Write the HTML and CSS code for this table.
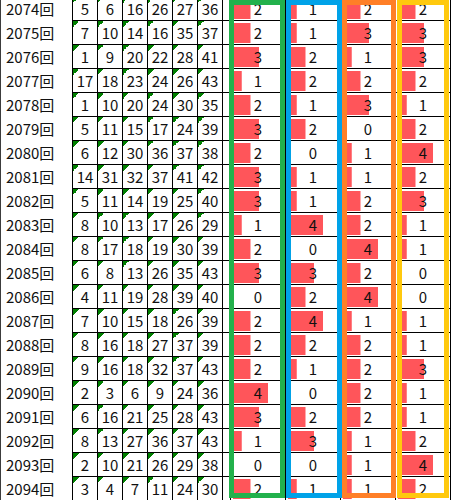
FILE: index.html
```html
<!DOCTYPE html>
<html>
<head>
<meta charset="UTF-8">
<title>回数表</title>
<link rel="stylesheet" href="styles.css">
</head>
<body>
<div class="sheet">
	<div class="row"><div class="no">2074回</div><div class="n">5</div><div class="n">6</div><div class="n">16</div><div class="n">26</div><div class="n">27</div><div class="n">36</div><div class="gap"></div><div class="d" style="--v:2">2</div><div class="d" style="--v:1">1</div><div class="d" style="--v:2">2</div><div class="d" style="--v:2">2</div></div>
	<div class="row"><div class="no">2075回</div><div class="n">7</div><div class="n">10</div><div class="n">14</div><div class="n">16</div><div class="n">35</div><div class="n">37</div><div class="gap"></div><div class="d" style="--v:2">2</div><div class="d" style="--v:1">1</div><div class="d" style="--v:3">3</div><div class="d" style="--v:3">3</div></div>
	<div class="row"><div class="no">2076回</div><div class="n">1</div><div class="n">9</div><div class="n">20</div><div class="n">22</div><div class="n">28</div><div class="n">41</div><div class="gap"></div><div class="d" style="--v:3">3</div><div class="d" style="--v:2">2</div><div class="d" style="--v:1">1</div><div class="d" style="--v:3">3</div></div>
	<div class="row"><div class="no">2077回</div><div class="n">17</div><div class="n">18</div><div class="n">23</div><div class="n">24</div><div class="n">26</div><div class="n">43</div><div class="gap"></div><div class="d" style="--v:1">1</div><div class="d" style="--v:2">2</div><div class="d" style="--v:2">2</div><div class="d" style="--v:2">2</div></div>
	<div class="row"><div class="no">2078回</div><div class="n">1</div><div class="n">10</div><div class="n">20</div><div class="n">24</div><div class="n">30</div><div class="n">35</div><div class="gap"></div><div class="d" style="--v:2">2</div><div class="d" style="--v:1">1</div><div class="d" style="--v:3">3</div><div class="d" style="--v:1">1</div></div>
	<div class="row"><div class="no">2079回</div><div class="n">5</div><div class="n">11</div><div class="n">15</div><div class="n">17</div><div class="n">24</div><div class="n">39</div><div class="gap"></div><div class="d" style="--v:3">3</div><div class="d" style="--v:2">2</div><div class="d" style="--v:0">0</div><div class="d" style="--v:2">2</div></div>
	<div class="row"><div class="no">2080回</div><div class="n">6</div><div class="n">12</div><div class="n">30</div><div class="n">36</div><div class="n">37</div><div class="n">38</div><div class="gap"></div><div class="d" style="--v:2">2</div><div class="d" style="--v:0">0</div><div class="d" style="--v:1">1</div><div class="d" style="--v:4">4</div></div>
	<div class="row"><div class="no">2081回</div><div class="n">14</div><div class="n">31</div><div class="n">32</div><div class="n">37</div><div class="n">41</div><div class="n">42</div><div class="gap"></div><div class="d" style="--v:3">3</div><div class="d" style="--v:1">1</div><div class="d" style="--v:1">1</div><div class="d" style="--v:2">2</div></div>
	<div class="row"><div class="no">2082回</div><div class="n">5</div><div class="n">11</div><div class="n">14</div><div class="n">19</div><div class="n">25</div><div class="n">40</div><div class="gap"></div><div class="d" style="--v:3">3</div><div class="d" style="--v:1">1</div><div class="d" style="--v:2">2</div><div class="d" style="--v:3">3</div></div>
	<div class="row"><div class="no">2083回</div><div class="n">8</div><div class="n">10</div><div class="n">13</div><div class="n">17</div><div class="n">26</div><div class="n">29</div><div class="gap"></div><div class="d" style="--v:1">1</div><div class="d" style="--v:4">4</div><div class="d" style="--v:2">2</div><div class="d" style="--v:1">1</div></div>
	<div class="row"><div class="no">2084回</div><div class="n">8</div><div class="n">17</div><div class="n">18</div><div class="n">19</div><div class="n">30</div><div class="n">39</div><div class="gap"></div><div class="d" style="--v:2">2</div><div class="d" style="--v:0">0</div><div class="d" style="--v:4">4</div><div class="d" style="--v:1">1</div></div>
	<div class="row"><div class="no">2085回</div><div class="n">6</div><div class="n">8</div><div class="n">13</div><div class="n">26</div><div class="n">35</div><div class="n">43</div><div class="gap"></div><div class="d" style="--v:3">3</div><div class="d" style="--v:3">3</div><div class="d" style="--v:2">2</div><div class="d" style="--v:0">0</div></div>
	<div class="row"><div class="no">2086回</div><div class="n">4</div><div class="n">11</div><div class="n">19</div><div class="n">28</div><div class="n">39</div><div class="n">40</div><div class="gap"></div><div class="d" style="--v:0">0</div><div class="d" style="--v:2">2</div><div class="d" style="--v:4">4</div><div class="d" style="--v:0">0</div></div>
	<div class="row"><div class="no">2087回</div><div class="n">7</div><div class="n">10</div><div class="n">15</div><div class="n">18</div><div class="n">26</div><div class="n">39</div><div class="gap"></div><div class="d" style="--v:2">2</div><div class="d" style="--v:4">4</div><div class="d" style="--v:1">1</div><div class="d" style="--v:1">1</div></div>
	<div class="row"><div class="no">2088回</div><div class="n">8</div><div class="n">16</div><div class="n">18</div><div class="n">27</div><div class="n">37</div><div class="n">39</div><div class="gap"></div><div class="d" style="--v:2">2</div><div class="d" style="--v:2">2</div><div class="d" style="--v:2">2</div><div class="d" style="--v:1">1</div></div>
	<div class="row"><div class="no">2089回</div><div class="n">9</div><div class="n">16</div><div class="n">18</div><div class="n">32</div><div class="n">37</div><div class="n">43</div><div class="gap"></div><div class="d" style="--v:2">2</div><div class="d" style="--v:1">1</div><div class="d" style="--v:2">2</div><div class="d" style="--v:3">3</div></div>
	<div class="row"><div class="no">2090回</div><div class="n">2</div><div class="n">3</div><div class="n">6</div><div class="n">9</div><div class="n">24</div><div class="n">36</div><div class="gap"></div><div class="d" style="--v:4">4</div><div class="d" style="--v:0">0</div><div class="d" style="--v:2">2</div><div class="d" style="--v:1">1</div></div>
	<div class="row"><div class="no">2091回</div><div class="n">6</div><div class="n">16</div><div class="n">21</div><div class="n">25</div><div class="n">28</div><div class="n">43</div><div class="gap"></div><div class="d" style="--v:3">3</div><div class="d" style="--v:2">2</div><div class="d" style="--v:2">2</div><div class="d" style="--v:1">1</div></div>
	<div class="row"><div class="no">2092回</div><div class="n">8</div><div class="n">13</div><div class="n">27</div><div class="n">36</div><div class="n">37</div><div class="n">43</div><div class="gap"></div><div class="d" style="--v:1">1</div><div class="d" style="--v:3">3</div><div class="d" style="--v:1">1</div><div class="d" style="--v:2">2</div></div>
	<div class="row"><div class="no">2093回</div><div class="n">2</div><div class="n">10</div><div class="n">21</div><div class="n">26</div><div class="n">29</div><div class="n">38</div><div class="gap"></div><div class="d" style="--v:0">0</div><div class="d" style="--v:0">0</div><div class="d" style="--v:1">1</div><div class="d" style="--v:4">4</div></div>
	<div class="row"><div class="no">2094回</div><div class="n">3</div><div class="n">4</div><div class="n">7</div><div class="n">11</div><div class="n">24</div><div class="n">30</div><div class="gap"></div><div class="d" style="--v:2">2</div><div class="d" style="--v:1">1</div><div class="d" style="--v:1">1</div><div class="d" style="--v:2">2</div></div>
</div>
<div class="box box-green"></div>
<div class="box box-blue"></div>
<div class="box box-orange"></div>
<div class="box box-yellow"></div>
</body>
</html>
```

FILE: styles.css
```css
html, body {
	margin: 0;
	padding: 0;
	background: #fff;
	overflow: hidden;
}

body {
	font-family: "Noto Sans CJK JP", "Liberation Sans", sans-serif;
	font-size: 15px;
	color: #111;
}

.sheet {
	margin-top: -3px;
}

.row {
	display: flex;
	height: 24px;
}

.row div {
	box-sizing: border-box;
	height: 24px;
	line-height: 23px;
}

.no {
	width: 72px;
	padding-left: 5px;
	border-left: 1px solid #3c3c3c;
	white-space: nowrap;
}

.n {
	width: 25px;
	text-align: center;
	border-left: 1px solid #000;
	border-bottom: 1px solid #000;
	background: linear-gradient(to bottom right, #008000 50%, transparent 50%) no-repeat 0 0 / 6px 6px;
}

.n:nth-child(7) {
	width: 26px;
	border-right: 1px solid #000;
}

.gap {
	width: 7px;
	border-bottom: 1px solid #000;
}

.d {
	width: 55px;
	text-align: center;
	border-left: 1px solid #000;
	border-bottom: 1px solid #000;
	background: linear-gradient(#ff555a, #ff555a) no-repeat;
	background-position: 2px 2px;
	background-size: calc(var(--v) * 8.75px) 20px;
}

.d:last-child {
	width: 56px;
	border-right: 1px solid #000;
}

.box {
	position: absolute;
	top: 0;
	height: 498px;
	box-sizing: border-box;
	border: 5px solid;
}

.box-green {
	left: 229px;
	width: 56px;
	border-color: #22b14c;
}

.box-blue {
	left: 286px;
	width: 56px;
	border-color: #00a2e8;
}

.box-orange {
	left: 342px;
	width: 54px;
	border-color: #ff7f27;
}

.box-yellow {
	left: 397px;
	width: 52px;
	border-color: #ffc90e;
}
```
